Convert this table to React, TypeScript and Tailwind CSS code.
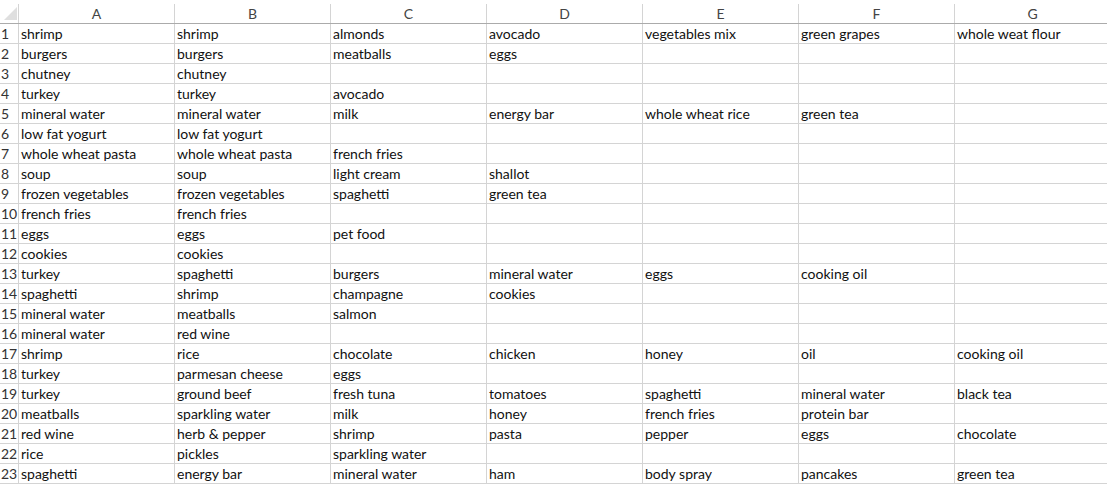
const COLS = ["A", "B", "C", "D", "E", "F", "G"];

const ROWS: string[][] = [
  ["shrimp", "shrimp", "almonds", "avocado", "vegetables mix", "green grapes", "whole weat flour"],
  ["burgers", "burgers", "meatballs", "eggs"],
  ["chutney", "chutney"],
  ["turkey", "turkey", "avocado"],
  ["mineral water", "mineral water", "milk", "energy bar", "whole wheat rice", "green tea"],
  ["low fat yogurt", "low fat yogurt"],
  ["whole wheat pasta", "whole wheat pasta", "french fries"],
  ["soup", "soup", "light cream", "shallot"],
  ["frozen vegetables", "frozen vegetables", "spaghetti", "green tea"],
  ["french fries", "french fries"],
  ["eggs", "eggs", "pet food"],
  ["cookies", "cookies"],
  ["turkey", "spaghetti", "burgers", "mineral water", "eggs", "cooking oil"],
  ["spaghetti", "shrimp", "champagne", "cookies"],
  ["mineral water", "meatballs", "salmon"],
  ["mineral water", "red wine"],
  ["shrimp", "rice", "chocolate", "chicken", "honey", "oil", "cooking oil"],
  ["turkey", "parmesan cheese", "eggs"],
  ["turkey", "ground beef", "fresh tuna", "tomatoes", "spaghetti", "mineral water", "black tea"],
  ["meatballs", "sparkling water", "milk", "honey", "french fries", "protein bar"],
  ["red wine", "herb & pepper", "shrimp", "pasta", "pepper", "eggs", "chocolate"],
  ["rice", "pickles", "sparkling water"],
  ["spaghetti", "energy bar", "mineral water", "ham", "body spray", "pancakes", "green tea"],
];

function CornerCell() {
  return (
    <div className="h-[24px] pt-[4px] border-b border-[#ababab]">
      <div className="h-[19px] border-r border-[#d4d4d4] relative">
        <svg className="absolute left-[4px] top-[3px]" width="13" height="13" viewBox="0 0 13 13">
          <polygon points="13,0 13,13 0,13" fill="#dfdfdf" />
        </svg>
      </div>
    </div>
  );
}

export default function App() {
  return (
    <div
      className="w-[1107px] h-[484px] overflow-hidden bg-white text-[#111]"
      style={{ fontFamily: "Lato, 'Liberation Sans', sans-serif" }}
    >
      <div className="grid grid-cols-[19px_repeat(7,156px)] text-[14px]">
        <CornerCell />
        {COLS.map((c) => (
          <div key={c} className="h-[24px] pt-[4px] border-b border-[#ababab]">
            <div className="h-[19px] border-r border-[#d4d4d4] text-center text-[#444] leading-[19px]">
              {c}
            </div>
          </div>
        ))}

        {ROWS.map((row, i) => (
          <Row key={i} n={i + 1} cells={row} />
        ))}
      </div>
    </div>
  );
}

function Row({ n, cells }: { n: number; cells: string[] }) {
  return (
    <>
      <div className="h-[20px] border-r border-b border-[#d4d4d4] pl-[1px] leading-[20px] text-[#333] whitespace-nowrap overflow-hidden">
        {n}
      </div>
      {COLS.map((c, j) => (
        <div
          key={c}
          className="h-[20px] border-r border-b border-[#d4d4d4] pl-[2px] leading-[20px] whitespace-nowrap overflow-hidden"
        >
          {cells[j] ?? ""}
        </div>
      ))}
    </>
  );
}
